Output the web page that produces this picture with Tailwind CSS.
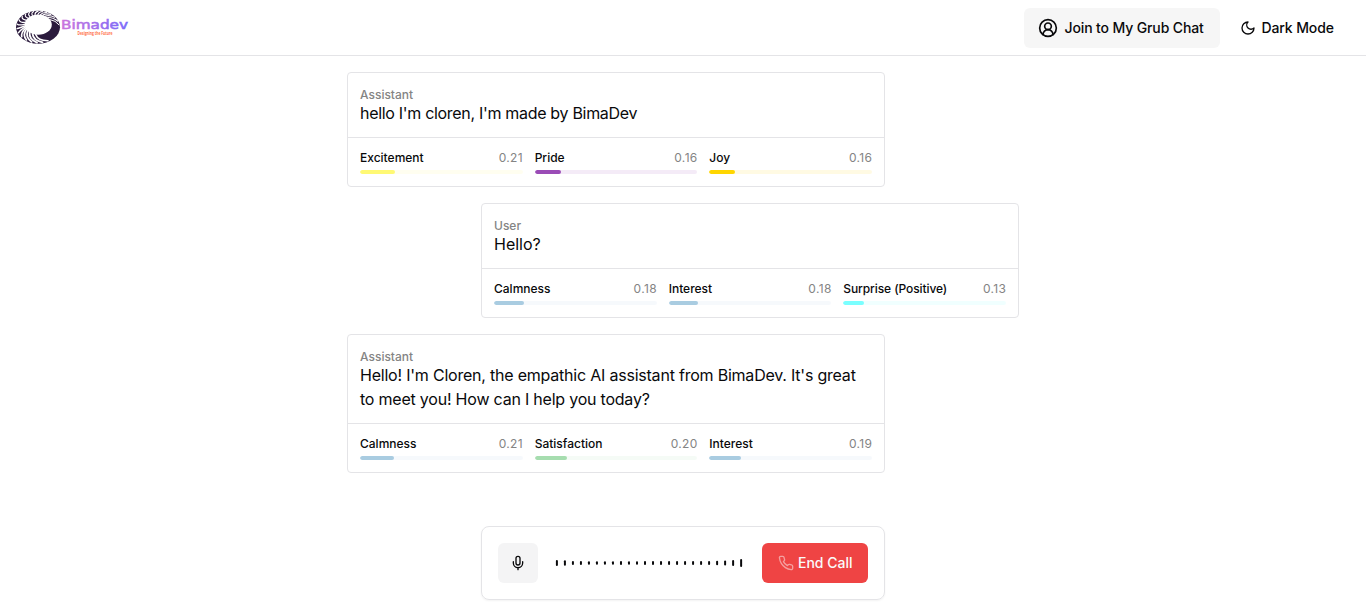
<!DOCTYPE html>
<html lang="en">
<head>
<meta charset="utf-8">
<title>Bimadev</title>
<script src="https://cdn.jsdelivr.net/npm/@tailwindcss/browser@4"></script>
</head>
<body class="h-screen overflow-hidden flex flex-col bg-white text-[#09090b] font-['Inter',sans-serif]">
<header class="h-14 shrink-0 border-b border-[#e4e4e7] flex items-center justify-between px-4">
  <svg class="w-[113px] h-[40px]" viewBox="16 8 113 40">
    <defs>
      <linearGradient id="brand" x1="0" x2="1"><stop offset="0" stop-color="#cc74dc"/><stop offset="1" stop-color="#7868fa"/></linearGradient>
      <mask id="ring"><rect x="14" y="8" width="50" height="40" fill="#fff"/><ellipse cx="38.2" cy="24.6" rx="13.6" ry="10.2" fill="#000"/></mask>
    </defs>
    <g mask="url(#ring)">
      <ellipse cx="38" cy="27.2" rx="22" ry="16.5" fill="#2b1b3d"/>
      <g id="swirl" fill="none" stroke="#fff" stroke-linecap="round"></g>
    </g>
    <text x="61" y="29" textLength="67" lengthAdjust="spacingAndGlyphs" font-family="DejaVu Sans" font-size="12.5" font-weight="400" fill="url(#brand)" stroke="url(#brand)" stroke-width=".55">Bimadev</text>
    <text x="77.500" y="35" textLength="35" lengthAdjust="spacingAndGlyphs" font-family="Open Sans" font-size="4.800" font-weight="700" fill="#ff7048">Designing the Future</text>
  </svg>
  <div class="flex gap-1 text-sm font-medium">
    <button class="w-[196px] h-10 rounded-md bg-[#f6f6f6] flex items-center pl-[14px]">
      <svg class="size-5 shrink-0" viewBox="0 0 24 24" fill="none" stroke="currentColor" stroke-width="2" stroke-linecap="round" stroke-linejoin="round"><path d="M18 20a6 6 0 0 0-12 0"/><circle cx="12" cy="10" r="4"/><circle cx="12" cy="12" r="10"/></svg>
      <span class="ml-[6.500px] whitespace-nowrap tracking-[-0.130px]">Join to My Grub Chat</span>
    </button>
    <button class="w-[126px] h-10 flex items-center pl-4">
      <svg class="size-4 shrink-0" viewBox="0 0 24 24" fill="none" stroke="currentColor" stroke-width="2" stroke-linecap="round" stroke-linejoin="round"><path d="M12 3a6 6 0 0 0 9 9 9 9 0 1 1-9-9Z"/></svg>
      <span class="ml-[5.500px] whitespace-nowrap tracking-[-0.120px]">Dark Mode</span>
    </button>
  </div>
</header>
<main id="chat" class="w-[672px] mx-auto pt-4 flex flex-col gap-4 grow"></main>
<footer class="flex justify-center pb-4 shrink-0">
  <div class="w-[404px] h-[74px] p-4 border border-[#e4e4e7] rounded-lg shadow-[0_1px_2px_0_rgba(0,0,0,0.05)] flex items-center">
    <button class="size-10 shrink-0 rounded-md bg-[#f4f4f5] grid place-items-center">
      <svg class="size-4" viewBox="0 0 24 24" fill="none" stroke="currentColor" stroke-width="2" stroke-linecap="round" stroke-linejoin="round"><path d="M12 2a3 3 0 0 0-3 3v7a3 3 0 0 0 6 0V5a3 3 0 0 0-3-3Z"/><path d="M19 10v2a7 7 0 0 1-14 0v-2"/><path d="M12 19v3"/></svg>
    </button>
    <svg class="w-[192px] h-8 ml-4 mr-4" viewBox="554 547 192 32"><g id="wave" fill="#09090b"></g></svg>
    <button class="w-[106px] h-10 shrink-0 rounded-md bg-[#ef4444] text-[#fafafa] text-sm font-medium flex items-center pl-4">
      <svg class="size-4 opacity-50 shrink-0" viewBox="0 0 24 24" fill="none" stroke="currentColor" stroke-width="2" stroke-linecap="round" stroke-linejoin="round"><path d="M22 16.920v3a2 2 0 0 1-2.180 2 19.790 19.790 0 0 1-8.630-3.070 19.500 19.500 0 0 1-6-6 19.790 19.790 0 0 1-3.070-8.670A2 2 0 0 1 4.110 2h3a2 2 0 0 1 2 1.720 12.840 12.840 0 0 0 .7 2.810 2 2 0 0 1-.45 2.110L8.090 9.910a16 16 0 0 0 6 6l1.270-1.270a2 2 0 0 1 2.110-.45 12.840 12.840 0 0 0 2.810.7A2 2 0 0 1 22 16.920z"/></svg>
      <span class="ml-[4px] whitespace-nowrap">End Call</span>
    </button>
  </div>
</footer>
<script>
const messages = [
  ['Assistant', [["hello I'm cloren, I'm made by BimaDev", -0.31]], [['Excitement','0.21','#fff974',35],['Pride','0.16','#9a4cb6',26],['Joy','0.16','#ffd600',26]]],
  ['User', [['Hello?', 0]], [['Calmness','0.18','#a9cce1',30],['Interest','0.18','#a9cce1',29],['Surprise (Positive)','0.13','#7affff',21]]],
  ['Assistant', [["Hello! I'm Cloren, the empathic AI assistant from BimaDev. It's great", -0.215], ['to meet you! How can I help you today?', -0.215]], [['Calmness','0.21','#a9cce1',34],['Satisfaction','0.20','#a6ddaf',32],['Interest','0.19','#a9cce1',32]]]
];
document.getElementById('chat').innerHTML = messages.map(([who, lines, scores]) => `
<section class="w-[538px] border border-[#e4e4e7] rounded ${who === 'User' ? 'ml-auto' : ''}">
  <div class="pt-4 px-3 pb-3 border-b border-[#e4e4e7]">
    <div class="text-xs leading-3 font-medium text-[#848484]"><span>${who}</span></div>
    ${lines.map(([l, t]) => `<div class="text-base leading-6 whitespace-nowrap" style="letter-spacing:${t}px"><span>${l}</span></div>`).join('')}
  </div>
  <div class="p-3 grid grid-cols-3 gap-3">${scores.map(([n, v, c, w]) => `
    <div class="flex flex-col gap-1">
      <div class="flex justify-between text-xs leading-4 whitespace-nowrap"><span class="font-medium" style="letter-spacing:${n.length > 15 ? -0.1 : 0}px">${n}</span><span class="text-[#848484] tracking-[0.350px] -mr-[0.350px]">${v}</span></div>
      <div class="h-1 rounded-full overflow-hidden" style="background:${c}1c"><div class="h-1 rounded-full" style="width:${w}px;background:${c}"></div></div>
    </div>`).join('')}
  </div>
</section>`).join('');
const heights = [6,5.5,4,4,3.5,3.5,3.5,3.5,4,3.5,3.5,4,4,4,4,4,4,4,4,4,4.5,5,6,8];
document.getElementById('wave').innerHTML = heights.map((h, i) => `<rect x="${555.9 + i * 8.01}" y="${563 - h / 2}" width="2" height="${h}" rx="1"/>`).join('');
// Curved white stripes around the logo ring: [angle at outer rim, angle at inner rim, width]
const stripes = [[62,100,1.6],[78,114,1.8],[93,128,1.8],[108,140,1.8],[124,151,1.7],[141,159,1.6],[158,165,1.5],[174,172,1.4],[190,181,1.4],[206,192,1.3],[221,206,1.2],[234,220,1.1],[246,233,1.1],[258,245,1.1],[270,257,1.1],[282,269,1.1],[294,280,1.2],[307,291,1.2],[322,303,1.2],[338,316,1.2],[352,330,1]];
const at = (a, k) => { const r = a * Math.PI / 180; return [38.1 + (13.6 + 8.4 * k) * Math.cos(r), 24.6 + 2.6 * k + (10.2 + 6.3 * k) * Math.sin(r)].map(n => n.toFixed(1)).join(' '); };
document.getElementById('swirl').innerHTML = stripes.map(([o, i, w]) => `<path stroke-width="${w}" d="M${at(o, 0.88)}Q${at(i + (o - i) * 0.25, 0.68)} ${at(i, 0)}"/>`).join('');
</script>
</body>
</html>
